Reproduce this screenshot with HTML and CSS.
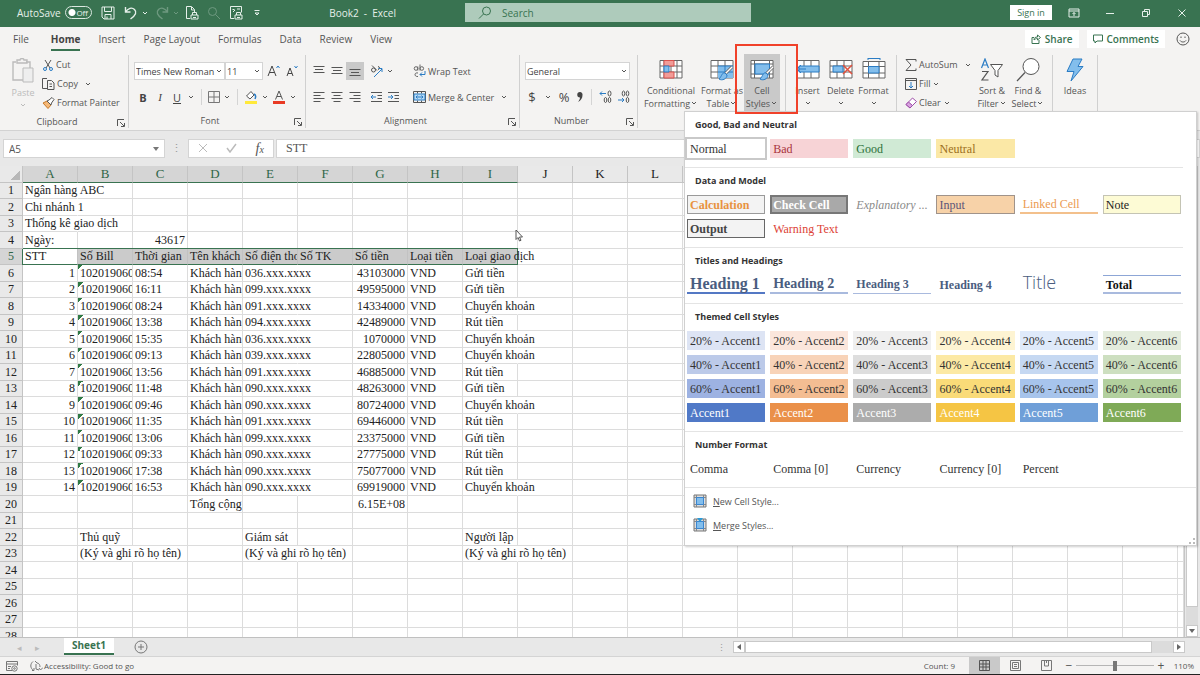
FILE: index.html
```html
<!DOCTYPE html>
<html lang="en">
<head>
    <meta charset="UTF-8">
    <meta name="viewport" content="width=device-width, initial-scale=1.0">
    <title>Book2 - Excel</title>
    <link rel="stylesheet" href="styles.css">
</head>
<body>
    <!-- Shared icons -->
    <svg class="defs" aria-hidden="true">
        <symbol id="chev" viewBox="0 0 8 8"><path d="M2 3l2 2 2-2" fill="none" stroke="currentColor"/></symbol>
        <symbol id="launch" viewBox="0 0 8 8"><path d="M.5 7V.5H7M3 3l4 4M7.5 4v3.500H4" fill="none" stroke="currentColor"/></symbol>
        <symbol id="cellicon" viewBox="0 0 14 14"><path d="M1 1h12v12H1z" fill="#ddd" stroke="#777"/><path d="M3.500 1v12M10.500 1v12M1 3.500h12M1 10.500h12" stroke="#888"/><path d="M3.500 3.500h7v7h-7z" fill="#83beec" stroke="#3a86d0"/></symbol>
        <symbol id="brush" viewBox="0 0 16 16"><path d="M15 1L8 8" stroke="#666" stroke-width="3"/><path d="M15 1L8 8" stroke="#fff" stroke-width="1.400"/><path d="M8 7c-3-1-3 3-6 6 3 2 8 0 8-4z" fill="#83beec" stroke="#2b7cc4"/></symbol>
    </svg>

    <div class="app">
        <header class="titlebar">
            <div class="title-left">
                <label class="autosave">AutoSave <input type="checkbox" class="switch"><span class="off">Off</span></label>
                <button class="tb save" aria-label="Save"><svg width="14" height="14" viewBox="0 0 14 14"><path d="M1 1h12v12H3l-2-2zM3.500 1v4.500h7V1M4 13V8.500h6V13M6 10.500v2.500"/></svg></button>
                <button class="tb undo" aria-label="Undo"><svg width="14" height="14" viewBox="0 0 14 14"><path d="M1.500 1v5h5M1.500 6C4 2 8 1 10.500 3.500S12 9 6.500 13" stroke-width="1.400"/></svg><svg width="8" height="8"><use href="#chev"/></svg></button>
                <button class="tb redo" aria-label="Redo"><svg width="14" height="14" viewBox="0 0 14 14"><path d="M12.500 1v5h-5M12.500 6C10 2 6 1 3.500 3.500S2 9 7.500 13" stroke-width="1.400"/></svg><svg width="8" height="8"><use href="#chev"/></svg></button>
                <button class="tb doc" aria-label="Print preview"><svg width="14" height="14" viewBox="0 0 14 14"><path d="M5 12.500H1.500v-12h5l3 3v3M6.500 1v3h3M6 9h7v4H6zM7.500 9V6.500h4V9M8 11.500h3"/></svg></button>
                <button class="tb find dim" aria-label="Find"><svg width="14" height="14" viewBox="0 0 14 14"><circle cx="5.500" cy="5.500" r="4"/><path d="M8.500 8.500L13 13"/></svg></button>
                <button class="tb print" aria-label="Quick print"><svg width="14" height="14" viewBox="0 0 14 14"><path d="M5 12.500H1.500v-12h11v6M3.500 3.500h2M8 3h3M4 6l2-2M6 9h7v4H6zM7.500 9V6.500h4V9M8 11.500h3"/></svg></button>
                <button class="tb" aria-label="Customize toolbar"><svg width="8" height="8" viewBox="0 0 8 8"><path d="M1.500 1.500h5M2 4l2 2 2-2z"/></svg></button>
                <span class="book">Book2&nbsp; -&nbsp; Excel</span>
            </div>
            <label class="search">
                <svg width="14" height="14" viewBox="0 0 14 14"><circle cx="8.500" cy="5" r="4"/><path d="M5.500 8L1 12.500"/></svg>
                <input type="text" placeholder="Search" aria-label="Search">
            </label>
            <div class="title-right">
                <button class="signin">Sign in</button>
                <button class="tb win" aria-label="Ribbon options"><svg width="12" height="10" viewBox="0 0 12 10"><path d="M1 1h10v8H1zM1 3h10M6 8V4.500M4.500 6L6 4.500 7.500 6"/></svg></button>
                <button class="tb win" aria-label="Minimize"><svg width="10" height="10" viewBox="0 0 10 10"><path d="M1 5.500h8"/></svg></button>
                <button class="tb win" aria-label="Restore"><svg width="10" height="10" viewBox="0 0 10 10"><path d="M1.500 3.500h5v5h-5zM3.500 3V1.500h5v5H7"/></svg></button>
                <button class="tb win" aria-label="Close"><svg width="10" height="10" viewBox="0 0 10 10"><path d="M1.500 1.500l7 7M8.500 1.500l-7 7"/></svg></button>
            </div>
        </header>

        <nav class="tabs">
            <a href="#" class="file">File</a>
            <a href="#" class="current">Home</a>
            <a href="#">Insert</a>
            <a href="#">Page Layout</a>
            <a href="#">Formulas</a>
            <a href="#">Data</a>
            <a href="#">Review</a>
            <a href="#">View</a>
            <div class="tab-actions">
                <button class="pill"><svg width="10" height="10" viewBox="0 0 10 10"><path d="M3 3.500H1v6h7V6M3 6c0-2 1-3 3.500-3V1L9.500 3.500 6.500 6V4.500C5 4.500 4 5 3 6z"/></svg>Share</button>
                <button class="pill"><svg width="10" height="10" viewBox="0 0 10 10"><path d="M.5 1h9v6H4L2 9V7H.5z"/></svg>Comments</button>
                <button class="smile" aria-label="Feedback"><svg width="14" height="14" viewBox="0 0 14 14"><circle cx="7" cy="7" r="6"/><path d="M4 8.500c1.500 2 4.500 2 6 0M5 4.500v1.500M9 4.500v1.500"/></svg></button>
            </div>
        </nav>

        <!-- Ribbon -->
        <section class="ribbon">
            <div class="group g-clipboard">
                <div class="body">
                    <button class="big paste">
                        <svg width="24" height="26" viewBox="0 0 24 26"><path d="M5 4H2v18h10M15 4h4v6M6 5V2h3c0-2 4-2 4 0h3v3z" fill="none" stroke="#bbb" stroke-width="1.400"/><path d="M12 10h10v14H12z" fill="#eee" stroke="#bbb"/></svg>
                        Paste
                        <svg width="8" height="8"><use href="#chev"/></svg>
                    </button>
                    <div class="stack">
                        <button><svg width="12" height="12" viewBox="0 0 12 12"><path d="M3 1l5 8M9 1L4 9" stroke="#555"/><circle cx="3" cy="10" r="1.500" stroke="#2b7cc4"/><circle cx="9" cy="10" r="1.500" stroke="#2b7cc4"/></svg>Cut</button>
                        <button><svg width="13" height="12" viewBox="0 0 13 12"><path d="M5 10.500H.5v-10H5M5.500 2.500h4l2.500 2.500v6.500H5.500zM7.500 6H10M7.500 8.500H10" stroke="#555"/></svg>Copy <svg width="8" height="8" class="gap-l"><use href="#chev"/></svg></button>
                        <button><svg width="13" height="12" viewBox="0 0 13 12"><path d="M1 6l4-2 4 4-3 3.500z" fill="#f5b877" stroke="#c77a2a"/><path d="M5 4l2-1 3-2.500L12 2.500 9.500 6 9 8z" fill="#fff" stroke="#555"/></svg>Format Painter</button>
                    </div>
                </div>
                <div class="label">Clipboard<svg width="8" height="8"><use href="#launch"/></svg></div>
            </div>

            <div class="group g-font">
                <div class="body rows">
                    <div class="row">
                        <span class="select font-name"><select aria-label="Font"><option>Times New Roman</option></select><svg width="8" height="8"><use href="#chev"/></svg></span>
                        <span class="select font-size"><select aria-label="Font size"><option>11</option></select><svg width="8" height="8"><use href="#chev"/></svg></span>
                        <button class="ic grow" aria-label="Increase font size"><svg width="14" height="14" viewBox="0 0 14 14"><path d="M1 12L5 2l4 10M2.500 8.500h5" stroke="#444"/><path d="M9.500 4l1.500-2 1.500 2" stroke="#2b7cc4"/></svg></button>
                        <button class="ic" aria-label="Decrease font size"><svg width="14" height="14" viewBox="0 0 14 14"><path d="M2 12l3-8 3 8M3 9.500h4" stroke="#444"/><path d="M9.500 2L11 4l1.500-2" stroke="#2b7cc4"/></svg></button>
                    </div>
                    <div class="row font-row">
                        <button class="letter b">B</button>
                        <button class="letter i">I</button>
                        <button class="letter u">U</button>
                        <svg width="8" height="8"><use href="#chev"/></svg>
                        <i class="sep"></i>
                        <button class="ic" aria-label="Borders"><svg width="12" height="12" viewBox="0 0 12 12"><path d="M.5 .5h11v11H.5zM6 1v10M1 6h10" stroke="#777"/></svg></button>
                        <svg width="8" height="8"><use href="#chev"/></svg>
                        <i class="sep"></i>
                        <button class="ic" aria-label="Fill color"><svg width="14" height="14" viewBox="0 0 14 14"><path d="M2.500 6L7 1.500l3 3.500-4 4z" fill="#fff" stroke="#555"/><path d="M10 4c2 1 2 3 1 5" stroke="#2b7cc4" stroke-width="1.500"/><path d="M1 11h12v3H1z" fill="#ffe93b"/></svg></button>
                        <svg width="8" height="8"><use href="#chev"/></svg>
                        <button class="ic" aria-label="Font color"><svg width="14" height="14" viewBox="0 0 14 14"><path d="M3.500 9.500L7 1l3.500 8.500M5 6.500h4" stroke="#555"/><path d="M1 11h12v3H1z" fill="#e83a24"/></svg></button>
                        <svg width="8" height="8"><use href="#chev"/></svg>
                    </div>
                </div>
                <div class="label">Font<svg width="8" height="8"><use href="#launch"/></svg></div>
            </div>

            <div class="group g-align">
                <div class="body">
                    <div class="align-grid">
                        <button class="ic" aria-label="Top align"><svg width="12" height="12" viewBox="0 0 12 12"><path d="M.5 1.500h11M2 4.500h8M.5 7.500h11" stroke="#555"/></svg></button>
                        <button class="ic" aria-label="Middle align"><svg width="12" height="12" viewBox="0 0 12 12"><path d="M.5 2.500h11M2 5.500h8M.5 8.500h11" stroke="#555"/></svg></button>
                        <button class="ic on" aria-label="Bottom align"><svg width="12" height="12" viewBox="0 0 12 12"><path d="M.5 4.500h11M2 7.500h8M.5 10.500h11" stroke="#555"/></svg></button>
                        <button class="ic wide" aria-label="Orientation"><svg width="14" height="14" viewBox="0 0 14 14"><circle cx="3.500" cy="6" r="2" stroke="#555"/><path d="M2 1.500l5 5M8 2.500c2 0 2 3 0 3" stroke="#555"/><path d="M4 13l8-8M8.500 4.500H12V8" stroke="#2b7cc4"/></svg><svg width="8" height="8"><use href="#chev"/></svg></button>
                        <button class="ic" aria-label="Align left"><svg width="12" height="12" viewBox="0 0 12 12"><path d="M.5 1.500h11M.5 4.500h7M.5 7.500h11M.5 10.500h7" stroke="#555"/></svg></button>
                        <button class="ic" aria-label="Center"><svg width="12" height="12" viewBox="0 0 12 12"><path d="M.5 1.500h11M2.500 4.500h7M.5 7.500h11M2.500 10.500h7" stroke="#555"/></svg></button>
                        <button class="ic" aria-label="Align right"><svg width="12" height="12" viewBox="0 0 12 12"><path d="M.5 1.500h11M4.500 4.500h7M.5 7.500h11M4.500 10.500h7" stroke="#555"/></svg></button>
                        <div class="indents">
                            <button class="ic" aria-label="Decrease indent"><svg width="13" height="12" viewBox="0 0 13 12"><path d="M1 1.500h11M7.500 4.500H12M7.500 7.500H12M1 10.500h11" stroke="#555"/><path d="M6 6H1M3 4L1 6l2 2" stroke="#2b7cc4"/></svg></button>
                            <button class="ic" aria-label="Increase indent"><svg width="13" height="12" viewBox="0 0 13 12"><path d="M1 1.500h11M7.500 4.500H12M7.500 7.500H12M1 10.500h11" stroke="#555"/><path d="M1 6h5M4 4l2 2-2 2" stroke="#2b7cc4"/></svg></button>
                        </div>
                    </div>
                    <div class="wrap-col">
                        <button><svg width="13" height="14" viewBox="0 0 13 14"><circle cx="3" cy="4.500" r="1.800" stroke="#666"/><path d="M4.800 2.500v4M7 .5v6" stroke="#666"/><circle cx="8.800" cy="4.500" r="1.800" stroke="#666"/><path d="M5 9c-4-1-4 4 0 3.500" stroke="#666"/><path d="M12 7v3.500H7M9 8.500l-2 2 2 2" stroke="#2b7cc4"/></svg>Wrap Text</button>
                        <button><svg width="13" height="12" viewBox="0 0 13 12"><path d="M.5 .5h12v11H.5zM4.500 .5v2M8.500 .5v2M4.500 9.500v2M8.500 9.500v2" stroke="#555"/><path d="M1 3h11v6H1z" fill="#b9dcf7" stroke="#2b7cc4"/><path d="M3 6h7M4.500 4.500L3 6l1.500 1.500M8.500 4.500L10 6 8.500 7.500" stroke="#2b7cc4"/></svg>Merge &amp; Center<svg width="8" height="8" class="gap-l"><use href="#chev"/></svg></button>
                    </div>
                </div>
                <div class="label">Alignment<svg width="8" height="8"><use href="#launch"/></svg></div>
            </div>

            <div class="group g-number">
                <div class="body rows">
                    <div class="row">
                        <span class="select number-format"><select aria-label="Number format"><option>General</option></select><svg width="8" height="8"><use href="#chev"/></svg></span>
                    </div>
                    <div class="row num-row">
                        <button class="letter sym">$</button>
                        <svg width="8" height="8"><use href="#chev"/></svg>
                        <button class="letter sym">%</button>
                        <button class="ic" aria-label="Comma style"><svg width="8" height="12" viewBox="0 0 8 12"><path d="M4 1a2.500 2.500 0 0 1 2.500 3C6.500 7 5 9.500 2 11c1-1.500 2-3 2-4.500A2.700 2.700 0 0 1 4 1z" fill="#444"/></svg></button>
                        <i class="sep"></i>
                        <button class="ic" aria-label="Increase decimal"><svg width="13" height="14" viewBox="0 0 13 14"><g stroke="#555"><ellipse cx="10.500" cy="3.500" rx="1.500" ry="2.500"/><ellipse cx="6.500" cy="10" rx="1.300" ry="2.500"/><ellipse cx="10.500" cy="10" rx="1.300" ry="2.500"/></g><path d="M7 3.500H1M3 1.500l-2 2 2 2" stroke="#2b7cc4"/></svg></button>
                        <button class="ic" aria-label="Decrease decimal"><svg width="13" height="14" viewBox="0 0 13 14"><g stroke="#555"><ellipse cx="6.500" cy="3.500" rx="1.300" ry="2.500"/><ellipse cx="10.500" cy="3.500" rx="1.300" ry="2.500"/><ellipse cx="10.500" cy="10" rx="1.300" ry="2.500"/></g><path d="M1 10h6M5 8l2 2-2 2" stroke="#2b7cc4"/></svg></button>
                    </div>
                </div>
                <div class="label">Number<svg width="8" height="8"><use href="#launch"/></svg></div>
            </div>

            <div class="group g-styles">
                <div class="body">
                    <button class="big">
                        <svg width="24" height="24" viewBox="0 0 24 24"><path d="M1 2.500h22v17.500H1zM1 8h22M1 14h22M5 2.500V20M12 2.500V20M18 2.500V20" fill="#fff" stroke="#666"/><path d="M5 2.500h10V8H5zM5 14h10v6H5z" fill="#f29c98" stroke="#d9534f"/><path d="M5 8h5v6H5z" fill="#83beec" stroke="#2b7cc4"/></svg>
                        <span>Conditional<br>Formatting<svg width="8" height="8"><use href="#chev"/></svg></span>
                    </button>
                    <button class="big">
                        <svg width="24" height="24" viewBox="0 0 24 24"><path d="M1 2.500h22v17.500H1zM1 8h22M1 14h22M8 2.500V20M15 2.500V20" fill="#fff" stroke="#666"/><path d="M8 8h15v12H8z" fill="#83beec"/><path d="M8 8h15M8 14h15M15 8v12" stroke="#2b7cc4"/><use href="#brush" x="7" y="8" width="16" height="16"/></svg>
                        <span>Format as<br>Table<svg width="8" height="8"><use href="#chev"/></svg></span>
                    </button>
                    <button class="big pressed">
                        <svg width="24" height="24" viewBox="0 0 24 24"><path d="M1 2.500h22v17.500H1zM1 6h22M1 16h22M4.500 2.500V20M19.500 2.500V20" fill="#fff" stroke="#666"/><path d="M5 6h14.500v10H5z" fill="#83beec" stroke="#2b7cc4"/><use href="#brush" x="8" y="8" width="16" height="16"/></svg>
                        <span>Cell<br>Styles<svg width="8" height="8"><use href="#chev"/></svg></span>
                        <i class="callout"></i>
                    </button>
                </div>
            </div>

            <div class="group g-cells">
                <div class="body">
                    <button class="big">
                        <svg width="24" height="24" viewBox="0 0 24 24"><path d="M1 2.500h22v17.500H1zM8 2.500V20M15 2.500V20" fill="#fff" stroke="#666"/><path d="M3 8h20v6H3z" fill="#83beec" stroke="#2b7cc4"/><path d="M10 11H1M5 7l-4 4 4 4" stroke="#2b7cc4" fill="none"/></svg>
                        Insert<svg width="8" height="8"><use href="#chev"/></svg>
                    </button>
                    <button class="big">
                        <svg width="24" height="24" viewBox="0 0 24 24"><path d="M1 2.500h22v17.500H1zM8 2.500V20M15 2.500V20M1 8h22M1 14h22" fill="#fff" stroke="#666"/><path d="M4 8h10v6H4z" fill="#83beec" stroke="#2b7cc4"/><path d="M14 7l9 9M23 7l-9 9" stroke="#e0513f" stroke-width="1.500"/></svg>
                        Delete<svg width="8" height="8"><use href="#chev"/></svg>
                    </button>
                    <button class="big">
                        <svg width="24" height="24" viewBox="0 0 24 24"><path d="M1 3.500h22V20H1zM6.500 3.500V20M17 3.500V20M1 8.500h22M1 15h22" fill="#fff" stroke="#666"/><path d="M6.500 8.500H17V15H6.500z" fill="#83beec" stroke="#2b7cc4"/><path d="M6 .5h12M6 0v2M18 0v2" stroke="#2b7cc4"/></svg>
                        Format<svg width="8" height="8"><use href="#chev"/></svg>
                    </button>
                </div>
            </div>

            <div class="group g-editing">
                <div class="body">
                    <div class="stack">
                        <button><svg width="12" height="12" viewBox="0 0 12 12"><path d="M11 2.500V.5H1L6 6l-5 5.500h10v-2" stroke="#555"/></svg>AutoSum <svg width="8" height="8" class="gap-l"><use href="#chev"/></svg></button>
                        <button><svg width="12" height="12" viewBox="0 0 12 12"><path d="M.5 .5h11v11H.5zM.5 2.500h11" stroke="#555"/><path d="M6 4v6M4 8l2 2 2-2" stroke="#2b7cc4"/></svg>Fill<svg width="8" height="8"><use href="#chev"/></svg></button>
                        <button><svg width="12" height="12" viewBox="0 0 12 12"><path d="M1 7.500L7.500 1l4 3.500L5 11z" fill="#fff" stroke="#9c4ba8"/><path d="M1 7.500L3.500 5l4 3.500L5 11z" fill="#d9a3e0" stroke="#9c4ba8"/></svg>Clear<svg width="8" height="8"><use href="#chev"/></svg></button>
                    </div>
                    <button class="big">
                        <svg width="24" height="24" viewBox="0 0 24 24"><path d="M1.500 10L5 1l3.500 9M2.500 7h5" fill="none" stroke="#2b7cc4" stroke-width="1.200"/><path d="M2 13.500h6L2 22h6.500" fill="none" stroke="#555" stroke-width="1.200"/><path d="M10.500 6.500h12l-4.500 6V19l-3-2v-4.500z" fill="#fff" stroke="#555"/></svg>
                        <span>Sort &amp;<br>Filter<svg width="8" height="8"><use href="#chev"/></svg></span>
                    </button>
                    <button class="big">
                        <svg width="24" height="24" viewBox="0 0 24 24"><circle cx="15" cy="8.500" r="8" fill="#fff" stroke="#555"/><path d="M9 14.500L1 23" stroke="#555" stroke-width="1.200"/></svg>
                        <span>Find &amp;<br>Select<svg width="8" height="8"><use href="#chev"/></svg></span>
                    </button>
                </div>
            </div>

            <div class="group g-ideas">
                <div class="body">
                    <button class="big">
                        <svg width="20" height="24" viewBox="0 0 20 24"><path d="M8 1h9l-4 7.500h5L6 23l3-9.500H2z" fill="#83beec" stroke="#2b7cc4"/></svg>
                        Ideas
                    </button>
                </div>
            </div>
        </section>

        <!-- Formula bar -->
        <section class="formula-bar">
            <div class="name-box"><input type="text" value="A5" aria-label="Name box"><svg width="6" height="4" viewBox="0 0 6 4"><path d="M0 0h6L3 4z"/></svg></div>
            <span class="dots">⋮</span>
            <div class="fx">
                <button aria-label="Cancel"><svg width="10" height="10" viewBox="0 0 10 10"><path d="M1 1l8 8M9 1L1 9" stroke="#bbb"/></svg></button>
                <button aria-label="Enter"><svg width="11" height="10" viewBox="0 0 11 10"><path d="M1 5l3 4 6-8" stroke="#bbb" stroke-width="1.500"/></svg></button>
                <button class="fn">f<small>x</small></button>
            </div>
            <input class="formula" type="text" value="STT" aria-label="Formula">
        </section>

        <!-- Worksheet -->
        <main class="sheet">
            <div class="grid">
                <table>
                    <colgroup id="cols"></colgroup>
                    <thead><tr id="colHeads"></tr></thead>
                    <tbody id="rows"></tbody>
                </table>
                <svg class="pointer" width="8" height="13" viewBox="0 0 8 13"><path d="M1 1v9.500L3 8.500l1.500 3.500 1.500-.7L4.500 8H7.500z" fill="#fff" stroke="#555"/></svg>
            </div>
            <div class="vscroll">
                <div class="track"><div class="thumb"></div></div>
                <button aria-label="Scroll down"><svg width="6" height="4" viewBox="0 0 6 4"><path d="M0 0h6L3 4z"/></svg></button>
            </div>
        </main>

        <footer>
            <div class="sheet-tabs">
                <button class="nav" aria-label="Previous sheet">◂</button>
                <button class="nav" aria-label="Next sheet">▸</button>
                <a href="#" class="sheet-tab">Sheet1</a>
                <button class="add" aria-label="New sheet"><svg width="14" height="14" viewBox="0 0 14 14"><circle cx="7" cy="7" r="6"/><path d="M7 4v6M4 7h6"/></svg></button>
                <span class="dots push">⋮</span>
                <div class="hscroll">
                    <button aria-label="Scroll left"><svg width="4" height="6" viewBox="0 0 4 6"><path d="M4 0v6L0 3z"/></svg></button>
                    <div class="track"><div class="thumb"></div></div>
                    <button aria-label="Scroll right"><svg width="4" height="6" viewBox="0 0 4 6"><path d="M0 0v6l4-3z"/></svg></button>
                </div>
            </div>
            <div class="status">
                <svg width="12" height="12" viewBox="0 0 12 12"><path d="M6 10.500H.5v-9h11v4M.5 4h11M2 6.500h3M2 8.500h2"/><circle cx="8.500" cy="8.500" r="2.700"/><circle cx="8.500" cy="8.500" r=".8"/></svg>
                <button class="access"><svg width="13" height="12" viewBox="0 0 13 12"><path d="M3 1.500C0 4 0 8 3.500 10.500M2 10.500h2V8M5 1l2 2M7 3c2 0 3 2 3 4M6 4v5l3 1M9 8l1.500 2L13 7.500"/></svg>Accessibility: Good to go</button>
                <span class="count">Count: 9</span>
                <button class="view on" aria-label="Normal view"><svg width="11" height="11" viewBox="0 0 11 11"><path d="M.5 .5h10v10H.5zM4 0v11M7 0v11M0 4h11M0 7h11"/></svg></button>
                <button class="view" aria-label="Page layout view"><svg width="11" height="11" viewBox="0 0 11 11"><path d="M.5 .5h10v10H.5zM2.500 2.500h6v6h-6zM4 4.500h3M4 6.500h3"/></svg></button>
                <button class="view" aria-label="Page break view"><svg width="11" height="11" viewBox="0 0 11 11"><path d="M.5 .5h10v10H.5zM3.500 .5v5.500h4V.5M5.500 .5V3"/></svg></button>
                <button class="zoom-btn">−</button>
                <input type="range" class="zoom" min="10" max="210" value="110" aria-label="Zoom">
                <button class="zoom-btn">+</button>
                <span class="percent">110%</span>
            </div>
        </footer>

        <!-- Cell styles menu -->
        <div class="gallery">
            <section>
                <h3>Good, Bad and Neutral</h3>
                <div class="swatches">
                    <button class="normal">Normal</button>
                    <button class="bad">Bad</button>
                    <button class="good">Good</button>
                    <button class="neutral">Neutral</button>
                </div>
            </section>
            <section>
                <h3>Data and Model</h3>
                <div class="swatches">
                    <button class="calculation">Calculation</button>
                    <button class="check">Check Cell</button>
                    <button class="explain">Explanatory ...</button>
                    <button class="input">Input</button>
                    <button class="linked">Linked Cell</button>
                    <button class="note">Note</button>
                    <button class="output">Output</button>
                    <button class="warning">Warning Text</button>
                </div>
            </section>
            <section>
                <h3>Titles and Headings</h3>
                <div class="swatches">
                    <button class="head h1">Heading 1</button>
                    <button class="head h2">Heading 2</button>
                    <button class="head h3">Heading 3</button>
                    <button class="head">Heading 4</button>
                    <button class="title">Title</button>
                    <button class="total">Total</button>
                </div>
            </section>
            <section>
                <h3>Themed Cell Styles</h3>
                <div class="swatches" id="themed"></div>
            </section>
            <section>
                <h3>Number Format</h3>
                <div class="swatches">
                    <button>Comma</button>
                    <button>Comma [0]</button>
                    <button>Currency</button>
                    <button>Currency [0]</button>
                    <button>Percent</button>
                </div>
            </section>
            <div class="menu">
                <button><svg width="14" height="14"><use href="#cellicon"/></svg><span><u>N</u>ew Cell Style...</span></button>
                <button><svg width="14" height="14"><use href="#cellicon"/><path d="M4 0h6L7 4z" fill="#2b9bd8"/></svg><span><u>M</u>erge Styles...</span></button>
            </div>
            <svg class="grip" width="6" height="6" viewBox="0 0 6 6"><path d="M4 0h2v2H4zM0 4h2v2H0zM4 4h2v2H4z" fill="#bbb"/></svg>
        </div>
    </div>

    <script src="script.js"></script>
</body>
</html>
```
FILE: styles.css
```css
* {
    box-sizing: border-box;
}

body {
    margin: 0;
    font-family: "Open Sans", "Noto Sans", sans-serif;
    font-size: 9px;
    color: #555;
    background: #e8e8e8;
}

button, input, select {
    font: inherit;
    color: inherit;
    margin: 0;
    padding: 0;
    border: none;
    background: none;
}

button {
    white-space: nowrap;
}

a {
    color: inherit;
    text-decoration: none;
}

svg {
    flex: none;
    fill: none;
}

.defs {
    position: absolute;
    width: 0;
    height: 0;
}

.app {
    position: relative;
    display: flex;
    flex-direction: column;
    height: 100vh;
    overflow: hidden;
    border-bottom: 1px solid #222;
}

/* Title bar */
.titlebar {
    display: flex;
    align-items: center;
    flex: none;
    height: 27px;
    padding-bottom: 2px;
    background: #397351;
    color: #e6f0ea;
    font-size: 10px;
}

.title-left {
    display: flex;
    align-items: center;
    width: 465px;
    padding-left: 17px;
}

.title-left svg, .title-right svg {
    stroke: currentColor;
}

.autosave {
    position: relative;
    display: flex;
    align-items: center;
    gap: 4px;
    width: 75px;
    margin-right: 9px;
}

.switch {
    appearance: none;
    width: 30px;
    height: 13px;
    border: 1px solid #dbe8e0;
    border-radius: 7px;
    background: radial-gradient(circle at 6px 50%, #fff 3px, transparent 4px);
}

.off {
    position: absolute;
    right: 4px;
    font-size: 8px;
}

.tb {
    display: flex;
    align-items: center;
    gap: 3px;
}

.save { margin-right: 9px; }
.undo { margin-right: 6px; }
.redo { margin-right: 5px; }
.doc, .find { margin-right: 8px; }
.print { margin-right: 10px; }

.redo, .dim {
    opacity: 0.3;
}

.book {
    margin: 0 69px 0 auto;
}

.search {
    display: flex;
    align-items: center;
    gap: 10px;
    flex: 1;
    max-width: 286px;
    height: 19px;
    padding-left: 13px;
    background: #aecbbb;
    color: #397351;
}

.search svg {
    stroke: currentColor;
}

.search input {
    width: 100%;
}

.search input::placeholder {
    color: #397351;
}

.title-right {
    display: flex;
    align-items: center;
    margin-left: auto;
}

.signin {
    width: 42px;
    height: 15px;
    margin-right: 4px;
    background: #fff;
    color: #397351;
    font-size: 9px;
}

.win {
    justify-content: center;
    width: 36px;
}

/* Ribbon tabs */
.tabs {
    display: flex;
    align-items: center;
    flex: none;
    gap: 18px;
    height: 27px;
    padding: 0 10px 3px 13px;
    background: #f4f3f2;
    font-size: 10px;
}

.tabs a {
    line-height: 16px;
    padding: 3px 0 2px;
    border-bottom: 2px solid transparent;
}

.tabs .file {
    margin-right: 4px;
}

.tabs .current {
    font-weight: 700;
    color: #444;
    border-color: #397351;
}

.tab-actions {
    display: flex;
    align-items: center;
    gap: 8px;
    margin-left: auto;
}

.pill {
    display: flex;
    align-items: center;
    gap: 4px;
    height: 18px;
    padding: 0 6px;
    background: #fff;
    color: #397351;
    font-weight: 600;
}

.pill svg, .smile svg {
    stroke: currentColor;
}

.smile {
    display: flex;
    margin-left: 3px;
}

/* Ribbon */
.ribbon {
    display: flex;
    flex: none;
    height: 77px;
    padding: 1px 0 2px;
    background: #f4f3f2;
    border-bottom: 1px solid #d2d2d2;
}

.group {
    display: flex;
    flex-direction: column;
    border-right: 1px solid #d0d0d0;
}

.g-clipboard { width: 129px; }
.g-font { width: 177px; }
.g-align { width: 214px; }
.g-number { width: 118px; }
.g-styles { width: 148px; }
.g-cells { width: 111px; }
.g-editing { width: 156px; }
.g-ideas { width: 45px; }

.body {
    display: flex;
    flex: 1;
}

.label {
    position: relative;
    height: 17px;
    line-height: 20px;
    padding-right: 14px;
    text-align: center;
}

.label svg {
    position: absolute;
    right: 3px;
    top: 7px;
}

.big {
    display: flex;
    flex-direction: column;
    align-items: center;
    flex: none;
    padding-top: 3px;
    line-height: 13px;
}

.big > svg:first-child {
    margin-bottom: 2px;
}

.big > svg:last-child:not(:first-child) {
    margin-top: 2px;
}

.paste {
    width: 38px;
    margin-left: 4px;
    color: #bbb;
}

.stack {
    display: grid;
    grid-template-rows: repeat(3, 19px);
}

.stack button, .wrap-col button {
    display: flex;
    align-items: center;
    gap: 2px;
}

.gap-l {
    margin-left: 4px;
}

.rows {
    flex-direction: column;
    padding: 7px 5px 0;
    gap: 8px;
}

.row {
    display: flex;
    align-items: center;
    height: 18px;
}

.select {
    position: relative;
    height: 18px;
    background: #fff;
    border: 1px solid #d4d4d4;
}

.select select {
    appearance: none;
    width: 100%;
    height: 16px;
    padding-left: 1px;
    color: #444;
}

.select svg {
    position: absolute;
    right: 1px;
    top: 4px;
    pointer-events: none;
}

.font-name { width: 91px; }
.font-size { width: 38px; }
.number-format { width: 105px; }

.ic {
    display: flex;
    align-items: center;
    justify-content: center;
}

.grow {
    margin: 0 4px;
}

.font-row {
    gap: 3px;
    padding-left: 2px;
}

.font-row .sep {
    margin: 0 3px;
}

.letter {
    width: 14px;
    font-size: 11px;
    color: #444;
}

.b { font-weight: 700; }
.i { font-family: "Liberation Serif", serif; font-style: italic; }
.u { text-decoration: underline; }

.sym {
    font-size: 13px;
}

.num-row {
    gap: 5px;
}

.sep {
    width: 1px;
    height: 16px;
    margin: 0 2px;
    background: #d4d4d4;
}

.align-grid {
    display: grid;
    grid-template-columns: repeat(3, 18px) 42px;
    grid-template-rows: 18px 18px;
    row-gap: 8px;
    padding: 7px 0 0 4px;
}

.on {
    background: #c9c9c9;
}

.wide {
    gap: 2px;
    justify-content: flex-start;
    padding-left: 6px;
}

.indents {
    display: flex;
    gap: 4px;
    padding-left: 6px;
}

.wrap-col {
    display: grid;
    grid-template-rows: 18px 18px;
    align-content: start;
    row-gap: 8px;
    margin-left: 3px;
    padding: 7px 0 0 4px;
}

.g-styles .body { padding-left: 3px; }
.g-styles .big { width: 60px; }
.g-styles .big:nth-child(2) { width: 42px; }

.g-styles .pressed {
    position: relative;
    width: 36px;
    height: 57px;
    margin: -1px 0 0 1px;
    padding-top: 4px;
    background: #c9c9c9;
}

.callout {
    position: absolute;
    z-index: 3;
    top: -10px;
    left: -9px;
    width: 63px;
    height: 70px;
    border: 2px solid #f0412a;
}

.g-cells .body { padding-left: 5px; }
.g-cells .big { width: 33px; }
.g-editing .body { padding-left: 8px; }
.g-editing .stack { width: 69px; }
.g-editing .big { width: 36px; }
.g-ideas .big { width: 44px; }

/* Formula bar */
.formula-bar {
    display: flex;
    flex: none;
    height: 35px;
    padding: 8px 0 8px 3px;
    font-size: 11px;
    font-family: "Liberation Serif", serif;
}

.name-box {
    display: flex;
    align-items: center;
    width: 162px;
    padding: 0 5px;
    background: #fff;
    border: 1px solid #d4d4d4;
    font-family: "Open Sans", sans-serif;
    font-size: 10px;
}

.name-box input {
    flex: 1;
    min-width: 0;
}

.name-box svg {
    fill: #777;
}

.dots {
    width: 23px;
    line-height: 19px;
    text-align: center;
    color: #999;
}

.fx {
    display: flex;
    align-items: center;
    justify-content: space-around;
    width: 86px;
    margin-right: 2px;
    background: #fff;
    border: 1px solid #d4d4d4;
}

.fn {
    font-style: italic;
    font-size: 14px;
}

.fn small {
    font-size: 10px;
}

.formula {
    flex: 1;
    padding-left: 9px;
    background: #fff;
    border: 1px solid #d4d4d4;
    font-size: 12px;
}

/* Worksheet */
.sheet {
    display: flex;
    flex: 1;
    min-height: 0;
    border-bottom: 1px solid #c0c0c0;
}

.grid {
    position: relative;
    flex: 1;
    min-width: 0;
    overflow: hidden;
    background: #fff;
    border-right: 1px solid #c6c6c6;
}

table {
    width: 100%;
    table-layout: fixed;
    border-collapse: separate;
    border-spacing: 0;
    font-family: "Liberation Serif", serif;
    font-size: 12px;
    line-height: 15px;
    color: #222;
}

.corner-col { width: 23px; }
.data-col { width: 55px; }

th, td {
    height: 16px;
    padding: 0 2px;
    border-right: 1px solid #dcdcdc;
    border-bottom: 1px solid #dcdcdc;
    white-space: nowrap;
    overflow: hidden;
    text-align: left;
}

tbody tr:nth-child(even) > * {
    height: 17px;
}

th {
    padding: 0;
    font-weight: 400;
    text-align: center;
    background: #e9e9e9;
    border-color: #c4c4c4;
}

thead th {
    height: 17px;
    font-size: 13px;
    line-height: 16px;
}

th.picked {
    background: #d5d5d5;
    color: #2f6547;
}

thead th.picked {
    border-bottom-color: #397351;
}

.corner {
    background: linear-gradient(135deg, transparent 50%, #b8b8b8 50%) 10px 4px / 10px 10px no-repeat #e9e9e9;
}

.num {
    text-align: right;
}

.spill {
    overflow: visible;
    border-right-color: transparent;
}

.flag {
    background: linear-gradient(135deg, #2f7a45 50%, transparent 50%) 0 0 / 5px 5px no-repeat;
}

.sel {
    background-color: #cbcbcb;
    border-right-color: #c2c2c2;
    border-bottom-color: #397351;
    box-shadow: 0 -1px #397351;
}

.sel.first {
    background-color: #fff;
    box-shadow: 0 -1px #397351, -1px 0 #397351;
}

.sel.last {
    border-right-color: #397351;
}

.pointer {
    position: absolute;
    left: 515px;
    top: 63px;
}

.vscroll {
    display: flex;
    flex-direction: column;
    width: 15px;
    padding: 0 2px 0 1px;
}

.track {
    flex: 1;
    background: #dcdcdc;
}

.vscroll .thumb {
    height: 96%;
    background: #fff;
    border: 1px solid #c9c9c9;
}

.vscroll button, .hscroll button {
    display: flex;
    align-items: center;
    justify-content: center;
    width: 12px;
    height: 12px;
    background: #fff;
    border: 1px solid #c9c9c9;
}

.vscroll svg, .hscroll svg {
    fill: #666;
}

/* Sheet tabs */
.sheet-tabs {
    display: flex;
    align-items: center;
    height: 19px;
    padding-left: 10px;
    border-bottom: 1px solid #d4d4d4;
}

.nav {
    width: 18px;
    color: #bbb;
}

.sheet-tab {
    align-self: flex-start;
    height: 17px;
    margin: 0 20px 0 18px;
    padding: 0 8px;
    line-height: 15px;
    background: #fff;
    border-bottom: 2px solid #397351;
    color: #397351;
    font-size: 10px;
    font-weight: 700;
}

.add {
    display: flex;
}

.add svg, .status svg {
    stroke: #777;
}

.push {
    margin-left: auto;
}

.hscroll {
    display: flex;
    width: 38%;
    margin-right: 15px;
}

.hscroll .thumb {
    width: 95%;
    height: 12px;
    background: #fff;
    border: 1px solid #c9c9c9;
}

/* Status bar */
.status {
    display: flex;
    align-items: center;
    height: 17px;
    padding: 0 6px;
    background: #f4f3f2;
    font-size: 8px;
}

.access {
    display: flex;
    align-items: center;
    gap: 1px;
    margin-left: 12px;
}

.count {
    margin: 0 14px 0 auto;
}

.view {
    display: flex;
    align-items: center;
    justify-content: center;
    width: 31px;
    height: 17px;
}

.view.on svg {
    stroke: #555;
}

.zoom-btn {
    width: 14px;
    font-size: 12px;
    line-height: 14px;
}

.zoom {
    appearance: none;
    width: 78px;
    height: 11px;
    background: linear-gradient(#b5b5b5, #b5b5b5) 0 5px / 100% 1px no-repeat;
}

.zoom::-webkit-slider-thumb {
    appearance: none;
    width: 4px;
    height: 10px;
    background: #777;
}

.percent {
    width: 26px;
    text-align: right;
}

/* Cell styles menu */
.gallery {
    position: absolute;
    z-index: 2;
    top: 111px;
    right: 3px;
    width: 513px;
    height: 435px;
    background: #fff;
    border: 1px solid #d0d0d0;
    box-shadow: 1px 1px 2px rgba(0, 0, 0, 0.2);
}

.gallery section {
    margin-right: 13px;
    padding: 0 2px 9px;
    border-bottom: 1px solid #e4e4e4;
}

.gallery h3 {
    height: 27px;
    margin: 0;
    padding-left: 8px;
    line-height: 26px;
    font-size: 9px;
    font-weight: 700;
    color: #333;
}

.swatches {
    display: grid;
    grid-template-columns: repeat(6, 1fr);
    grid-auto-rows: 19px;
    gap: 5px;
    font-family: "Liberation Serif", serif;
    font-size: 12px;
    color: #333;
}

.swatches button {
    padding-left: 3px;
    line-height: 18px;
    text-align: left;
}

.normal {
    outline: 2px solid #c9c9c9;
}

.bad { background: #f7d3d6; color: #a8343c; }
.good { background: #d0ead5; color: #2b7038; }
.neutral { background: #fbe8a6; color: #9c6f1c; }

.swatches .calculation, .swatches .output {
    padding-left: 2px;
    background: #f3f3f3;
    border: 1px solid #9a9a9a;
    color: #e8923f;
    font-weight: 700;
}

.swatches .output {
    border-color: #666;
    color: #444;
}

.swatches .check {
    padding-left: 1px;
    line-height: 14px;
    background: #a9a9a9;
    border: 2px solid #777;
    color: #fff;
    font-weight: 700;
}

.explain { color: #8a8a8a; font-style: italic; }

.swatches .input, .swatches .note {
    padding-left: 2px;
    background: #f7d2a8;
    border: 1px solid #a0938a;
    color: #5c5478;
}

.swatches .note {
    background: #fdfbd5;
    border-color: #c4c4b4;
    color: #222;
}

.linked { color: #eb9a50; border-bottom: 2px solid #f3c08c; }
.warning { color: #dd4336; }
.head { color: #4a5d80; font-weight: 700; }
.h1 { font-size: 16px; border-bottom: 2px solid #5478c4; }
.h2 { font-size: 14px; border-bottom: 2px solid #a9bade; }
.h3 { border-bottom: 1px solid #a9bade; }

.swatches .title {
    padding-bottom: 4px;
    font-family: "Open Sans", sans-serif;
    font-size: 18px;
    font-weight: 300;
    line-height: 15px;
    color: #4a5d80;
}

.total {
    border-top: 1px solid #8da6d6;
    border-bottom: 2px solid #a9bade;
    color: #111;
    font-weight: 700;
}

.solid {
    color: #fff;
}

.menu {
    padding: 1px 0 0 8px;
}

.menu button {
    display: flex;
    align-items: center;
    gap: 6px;
    height: 24px;
}

.gallery > section:nth-last-of-type(1) {
    margin-right: 0;
    padding-right: 15px;
}

.grip {
    position: absolute;
    right: 1px;
    bottom: 1px;
}
```
FILE: script.js
```js
const columns = 'ABCDEFGHIJKLMNOPQRSTU'.split('');
const picked = 9;

// time, phone, amount, kind
const bills = [
    ['08:54', '036.xxx.xxxx', '43103000', 'Gửi tiền'],
    ['16:11', '099.xxx.xxxx', '49595000', 'Gửi tiền'],
    ['08:24', '091.xxx.xxxx', '14334000', 'Chuyển khoản'],
    ['13:38', '094.xxx.xxxx', '42489000', 'Rút tiền'],
    ['15:35', '036.xxx.xxxx', '1070000', 'Chuyển khoản'],
    ['09:13', '039.xxx.xxxx', '22805000', 'Chuyển khoản'],
    ['13:56', '091.xxx.xxxx', '46885000', 'Rút tiền'],
    ['11:48', '090.xxx.xxxx', '48263000', 'Gửi tiền'],
    ['09:46', '090.xxx.xxxx', '80724000', 'Chuyển khoản'],
    ['11:35', '091.xxx.xxxx', '69446000', 'Rút tiền'],
    ['13:06', '099.xxx.xxxx', '23375000', 'Gửi tiền'],
    ['09:33', '090.xxx.xxxx', '27775000', 'Rút tiền'],
    ['17:38', '090.xxx.xxxx', '75077000', 'Rút tiền'],
    ['16:53', '090.xxx.xxxx', '69919000', 'Chuyển khoản']
];

const sign = '(Ký và ghi rõ họ tên)';
const data = {
    1: { A: 'Ngân hàng ABC' },
    2: { A: 'Chi nhánh 1' },
    3: { A: 'Thống kê giao dịch' },
    4: { A: 'Ngày:', C: '43617' },
    5: { A: 'STT', B: 'Số Bill', C: 'Thời gian', D: 'Tên khách', E: 'Số điện thoại', F: 'Số TK', G: 'Số tiền', H: 'Loại tiền', I: 'Loại giao dịch' },
    20: { D: 'Tổng cộng', G: '6.15E+08' },
    22: { B: 'Thủ quỹ', E: 'Giám sát', I: 'Người lập' },
    23: { B: sign, E: sign, I: sign }
};

bills.forEach((b, i) => {
    data[i + 6] = { A: String(i + 1), B: '1020190601', C: b[0], D: 'Khách hàng', E: b[1], G: b[2], H: 'VND', I: b[3] };
});

function cellClass(row, col, text) {
    const names = [];
    const next = columns[columns.indexOf(col) + 1];
    if (/^[\d.E+]+$/.test(text) && col !== 'B') names.push('num');
    if (col === 'B' && /^\d/.test(text)) names.push('flag');
    if (text.length > 10 && !(data[row] || {})[next]) names.push('spill');
    if (row === 5 && columns.indexOf(col) < picked) {
        names.push('sel');
        if (col === 'A') names.push('first');
        if (col === 'I') names.push('last');
    }
    return names.join(' ');
}

document.getElementById('cols').innerHTML =
    '<col class="corner-col">' + columns.map(() => '<col class="data-col">').join('') + '<col>';

document.getElementById('colHeads').innerHTML =
    '<th class="corner"></th>' +
    columns.map((c, i) => `<th class="${i < picked ? 'picked' : ''}">${c}</th>`).join('') + '<th></th>';

let html = '';
for (let r = 1; r <= 28; r++) {
    html += `<tr><th class="${r === 5 ? 'picked' : ''}">${r}</th>`;
    html += columns.map(c => {
        const text = (data[r] || {})[c] || '';
        return `<td class="${cellClass(r, c, text)}">${text}</td>`;
    }).join('');
    html += '<td></td></tr>';
}
document.getElementById('rows').innerHTML = html;

// Themed styles, one row per tint
const themed = [
    ['20% - ', ['#dde4f4', '#fbe6dc', '#efefef', '#fef4d2', '#dfeafa', '#e4ecdd']],
    ['40% - ', ['#bccae9', '#f8d3b8', '#dedede', '#fce9a4', '#c5d8f2', '#cddfc0']],
    ['60% - ', ['#9db2e2', '#f4bd92', '#cbcbcb', '#fadb78', '#a7c4ec', '#b3d09e']],
    ['', ['#5079c7', '#ea9049', '#acacac', '#f5c544', '#6f9fd8', '#7faa57']]
];

document.getElementById('themed').innerHTML = themed.map(([tint, colors]) =>
    colors.map((color, i) =>
        `<button class="${tint ? '' : 'solid'}" style="background: ${color}">${tint}Accent${i + 1}</button>`
    ).join('')
).join('');
```
